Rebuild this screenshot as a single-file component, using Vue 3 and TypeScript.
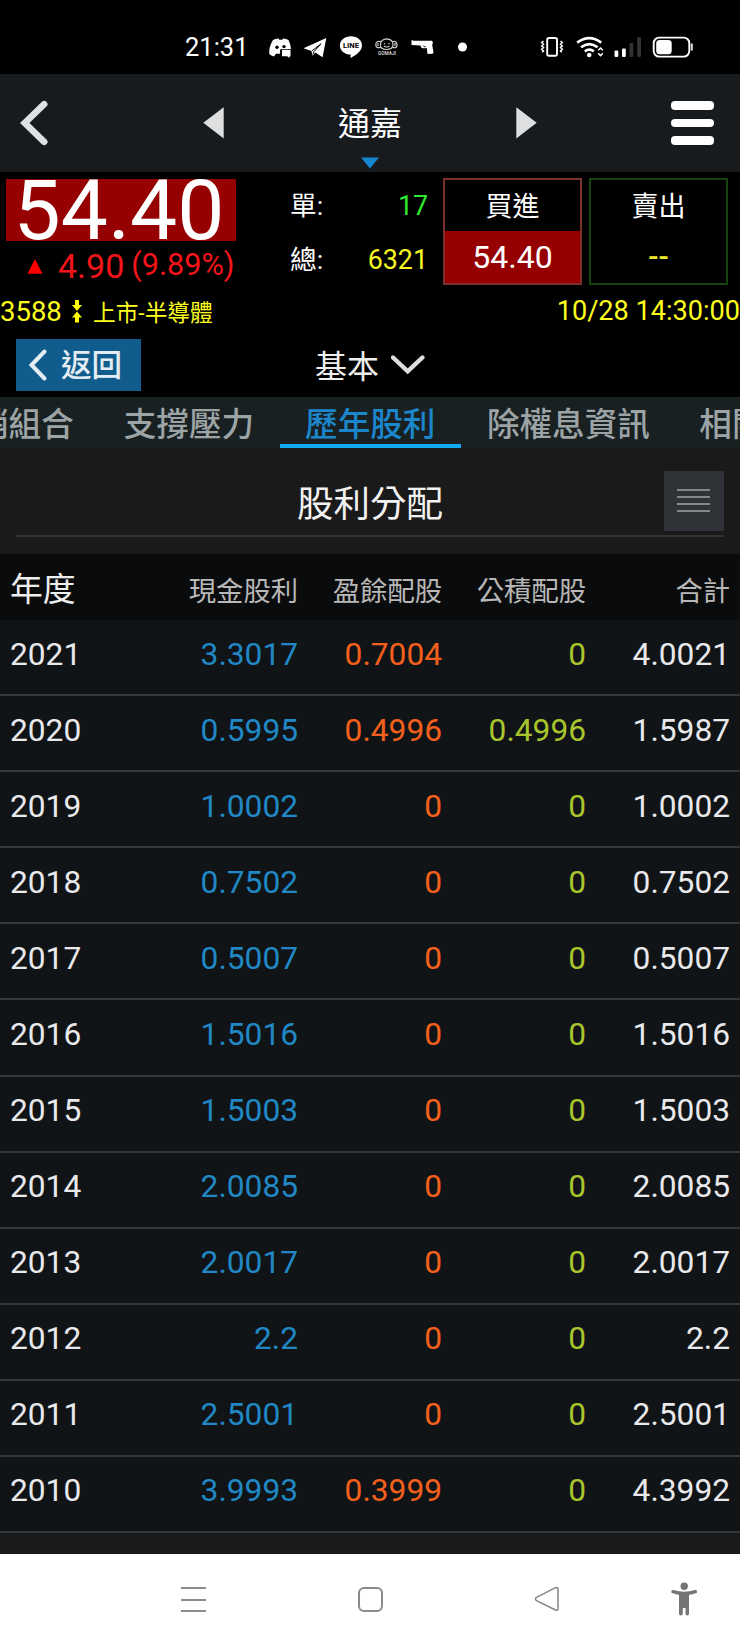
<script setup lang="ts">
interface Dividend {
  year: string
  cash: string
  earnings: string
  capital: string
  total: string
}

const tabs: { label: string; active?: boolean }[] = [
  { label: '銷組合' },
  { label: '支撐壓力' },
  { label: '歷年股利', active: true },
  { label: '除權息資訊' },
  { label: '相關' },
]

const row = (year: string, cash: string, earnings: string, capital: string, total: string): Dividend => ({
  year, cash, earnings, capital, total,
})

const dividends: Dividend[] = [
  row('2021', '3.3017', '0.7004', '0', '4.0021'),
  row('2020', '0.5995', '0.4996', '0.4996', '1.5987'),
  row('2019', '1.0002', '0', '0', '1.0002'),
  row('2018', '0.7502', '0', '0', '0.7502'),
  row('2017', '0.5007', '0', '0', '0.5007'),
  row('2016', '1.5016', '0', '0', '1.5016'),
  row('2015', '1.5003', '0', '0', '1.5003'),
  row('2014', '2.0085', '0', '0', '2.0085'),
  row('2013', '2.0017', '0', '0', '2.0017'),
  row('2012', '2.2', '0', '0', '2.2'),
  row('2011', '2.5001', '0', '0', '2.5001'),
  row('2010', '3.9993', '0.3999', '0', '4.3992'),
]
</script>

<template>
  <div class="screen">
    <div class="status">
      <span class="clock">21:31</span>
      <svg class="notices" width="200" height="24" viewBox="268 35 200 24">
        <!-- chat controller -->
        <path fill="#fff" d="M273 40q3-1.700 5.500-1.500l.8 1.300h3l.8-1.300q3 0 5.400 1.500 2.200 4 2.500 9h-9.500q-1.500 0-1.500 1.500v3.300h-4l-2 2.600q-3-.8-4.700-2.400Q268.500 47 273 40z" />
        <circle cx="277" cy="47.200" r="1.700" fill="#000" /><circle cx="284" cy="46.600" r="1.700" fill="#000" />
        <path fill="#fff" d="M282 49.800h8.500v6.500h-1v1.700l-2.300-1.700H282z" />
        <!-- paper plane -->
        <path fill="#fff" d="M303.500 48.300L326.300 38l-3.700 19.300-7.300-4.900-2.800 3.300-1-4.800z" />
        <path d="M312 50.800l9.100-7-7 7.600-1.200 3" stroke="#000" stroke-width="1" fill="none" />
        <!-- LINE -->
        <path fill="#fff" d="M351 36.200c6.300 0 11 4.100 11 9.200 0 5.700-6.500 9.800-11.600 12.700l.3-3.500c-6-.2-10.800-4-10.800-9.200 0-5.100 4.800-9.200 11.100-9.200z" />
        <text x="351" y="48" text-anchor="middle" textLength="16" lengthAdjust="spacingAndGlyphs" class="line-mark">LINE</text>
        <!-- monkey -->
        <g fill="none" stroke="#ccc" stroke-width="1.200">
          <path d="M380.500 44.500q0-5 6-5.600 6.500.5 6.500 5.600 0 5-6.500 5t-6-5z" />
          <path d="M381 41.500q-5-1-5.200 3t5.200 3M392.500 41.500q4-1 4.500 3t-4.500 3M378 43v3M395 43v3" />
          <path d="M384 46q2.600 2 5.400 0M384.500 43v1.300M389 43v1.300" />
        </g>
        <text x="387" y="55" text-anchor="middle" textLength="18" lengthAdjust="spacingAndGlyphs" class="gomaji-mark">GOMAJI</text>
        <!-- pistol -->
        <path fill="#fff" d="M411.500 40.700l.5-.7 1.500.8h18.500l1 2-.8 2 1.300 8-1 1-5 .2-.7-6q-3 .8-5.500-.2l-.8-2.300-9-.5z" />
        <path d="M423 45.500l1 1.200h1.800" stroke="#000" stroke-width=".8" fill="none" />
        <circle cx="462.500" cy="47" r="4.500" fill="#fff" />
      </svg>
      <svg class="system" width="154" height="24" viewBox="540 35 154 24">
        <g fill="none" stroke="#fff">
          <rect x="547.200" y="38" width="9.800" height="17.800" rx="1.800" stroke-width="1.900" />
          <path d="M543.500 41l-1.800 1.500 1.800 1.700-1.800 1.700 1.800 1.700-1.800 1.700 1.800 1.700-1.300 1.300M560.500 41l1.800 1.500-1.800 1.700 1.800 1.700-1.800 1.700 1.800 1.700-1.800 1.700 1.300 1.300" stroke-width="1.500" />
          <path d="M577.200 42.600q12.200-9 24 0M581 47.300q8.300-6.400 16.600 0M584.800 51.400q4.700-3.500 9 0" stroke-width="2.700" />
          <path d="M598.200 50.300l2.300-2.300 2.300 2.300M598.200 53.300l2.300 2.300 2.300-2.300" stroke-width="1.500" />
        </g>
        <circle cx="589.200" cy="55" r="2.300" fill="#fff" />
        <rect x="614.500" y="50.500" width="3.800" height="6.500" rx="1.200" fill="#fff" />
        <rect x="622" y="48.500" width="3.800" height="8.500" rx="1.200" fill="#fff" />
        <rect x="629.500" y="43" width="3.800" height="14" rx="1.200" fill="#333" />
        <rect x="637.200" y="37" width="3.800" height="20" rx="1.200" fill="#333" />
        <rect x="653.700" y="37.600" width="35.600" height="19" rx="5.500" fill="none" stroke="#fff" stroke-width="1.900" />
        <rect x="656.200" y="40" width="15.500" height="14.200" rx="3.500" fill="#fff" />
        <path d="M691.800 43.500v7" stroke="#ddd" stroke-width="2" />
      </svg>
    </div>

    <header class="topbar">
      <svg class="back-icon" width="30" height="48" viewBox="20 99 30 48"><path d="M44.200 104.200L24.800 123l19.400 18.800" fill="none" stroke="#dfe0e1" stroke-width="6.600" stroke-linecap="round" /></svg>
      <svg class="prev" width="21" height="32"><path d="M.300 15.800L20.700.200v31.400z" fill="#dedfe1" /></svg>
      <div class="stock">
        <span>通嘉</span>
        <svg width="18" height="12"><path d="M0 .500h18L9 11.500z" fill="#1487cc" /></svg>
      </div>
      <svg class="next" width="21" height="32"><path d="M.300.200L20.700 15.800.300 31.600z" fill="#dedfe1" /></svg>
      <div class="burger"><i></i><i></i><i></i></div>
    </header>

    <section class="quote">
      <div class="price-col">
        <div class="price">54.40</div>
        <div class="change">
          <svg width="16" height="15"><path d="M8 0l7.500 14.700H.5z" fill="#f00" /></svg>
          <span class="diff">4.90</span>
          <span class="pct">(9.89%)</span>
        </div>
      </div>
      <div class="volume">
        <div class="vol"><span>單:</span><b class="lime">17</b></div>
        <div class="vol"><span>總:</span><b class="yellow">6321</b></div>
      </div>
      <div class="deal buy"><span class="cap">買進</span><span class="val">54.40</span></div>
      <div class="deal sell"><span class="cap">賣出</span><span class="val">--</span></div>
    </section>

    <div class="meta">
      <span class="code">3588</span>
      <svg width="10" height="23" viewBox="0 0 10 23" fill="#ff0"><path d="M3 0h4v5h3L5 11 0 5h3zM3 22.500h4v-5h3L5 11.500 0 17.500h3z" /></svg>
      <span class="market">上市-半導體</span>
      <span class="time">10/28 14:30:00</span>
    </div>

    <div class="category">
      <div class="return">
        <svg width="20" height="32" viewBox="28 350 20 32"><path d="M44.500 352.500L31.500 366l13 13.500" fill="none" stroke="#e3edf3" stroke-width="4" stroke-linecap="round" /></svg>
        <span>返回</span>
      </div>
      <div class="select">
        <span>基本</span>
        <svg width="34" height="20" viewBox="391 355 34 20"><path d="M393 357.500l14.700 13.800 14.700-13.800" fill="none" stroke="#dedede" stroke-width="4.400" stroke-linecap="round" /></svg>
      </div>
    </div>

    <nav class="tabs">
      <span v-for="t in tabs" :key="t.label" class="tab" :class="{ active: t.active }">{{ t.label }}</span>
    </nav>

    <div class="section-head">
      <h1>股利分配</h1>
      <div class="list-btn"><i></i><i></i><i></i><i></i></div>
    </div>

    <div class="row head">
      <span class="year">年度</span><span>現金股利</span><span>盈餘配股</span><span>公積配股</span><span>合計</span>
    </div>
    <div class="body">
      <div v-for="d in dividends" :key="d.year" class="row">
        <span class="year">{{ d.year }}</span>
        <span class="cash">{{ d.cash }}</span>
        <span class="earnings">{{ d.earnings }}</span>
        <span class="capital">{{ d.capital }}</span>
        <span class="total">{{ d.total }}</span>
      </div>
    </div>

    <footer class="sysnav">
      <div class="recent"><i></i><i></i><i></i></div>
      <div class="home"></div>
      <svg class="sys-back" width="26" height="26" viewBox="534 1586 26 26"><path d="M536.500 1597.300L555.500 1587.600Q558 1586.800 558 1589.500V1608.500Q558 1611 555.500 1610L536.500 1600.700Q534.500 1599 536.500 1597.300z" fill="none" stroke="#858585" stroke-width="1.500" /></svg>
      <svg class="person" width="26" height="34" viewBox="671 1582 26 34">
        <circle cx="684.200" cy="1586.200" r="3.700" fill="#757575" />
        <path d="M673 1591.700q11.200 3.600 22.400 0" fill="none" stroke="#757575" stroke-width="3.400" stroke-linecap="round" />
        <path d="M679 1593h10v20.500q0 2-1.800 2t-1.700-2v-5.500h-2.700v5.500q0 2-1.900 2t-1.900-2z" fill="#757575" />
      </svg>
    </footer>
  </div>
</template>

<style>
body { margin: 0; background: #000; }
</style>

<style scoped>
* { box-sizing: border-box; }
.screen {
  width: 740px;
  height: 1644px;
  overflow: hidden;
  display: flex;
  flex-direction: column;
  background: #1a1a1a;
  color: #fff;
  font-family: Roboto, "Noto Sans CJK TC", sans-serif;
  white-space: nowrap;
}
svg, i { display: block; flex: none; }

.status { height: 74px; flex: none; display: flex; padding: 35px 0 0 185px; background: #000; }
.clock { width: 83px; font-size: 25.500px; line-height: 25px; }
.system { margin-left: 72px; }
.line-mark { font: 700 7px Roboto, sans-serif; fill: #000; }
.gomaji-mark { font: 700 5px Roboto, sans-serif; fill: #ccc; }

.topbar { height: 98px; flex: none; display: flex; background: #181b1e; }
.back-icon { margin: 25px 0 0 20px; }
.prev { margin: 33px 0 0 153px; }
.stock { width: 292px; padding-top: 27px; display: flex; flex-direction: column; align-items: center; font-size: 32px; line-height: 46px; }
.stock svg { margin-top: 10px; }
.next { margin-top: 33px; }
.burger { width: 43px; margin: 27px 0 0 134px; display: flex; flex-direction: column; gap: 9px; }
.burger i { height: 8.600px; border-radius: 4px; background: #fff; }

.quote { height: 124px; flex: none; display: flex; padding-top: 6px; background: #000; }
.price-col { width: 230px; margin-left: 6px; padding-top: 1px; }
.price { height: 62px; background: #960000; font-size: 84px; line-height: 64px; text-align: center; overflow: hidden; padding-right: 4px; }
.change { height: 48px; display: flex; align-items: baseline; padding-left: 21px; color: #f5141a; line-height: 50px; }
.change svg { align-self: flex-start; margin-top: 18px; }
.diff { margin-left: 15px; font-size: 34px; }
.pct { margin-left: 7px; font-size: 30.600px; position: relative; top: -3px; }
.volume { width: 138px; margin: 2px 0 0 54px; }
.vol { height: 54px; display: flex; justify-content: space-between; line-height: 52px; font-size: 26.700px; }
.vol b { font-weight: 400; font-size: 26.800px; }
.lime { color: #2fe82f; }
.yellow { color: #f8f820; }
.deal { width: 139px; height: 107px; margin-left: 15px; border: 2px solid #7b312b; display: flex; flex-direction: column; text-align: center; }
.cap { height: 51px; font-size: 27px; line-height: 54px; }
.buy .val { flex: 1; background: #960000; font-size: 32px; line-height: 52px; }
.sell { margin-left: 7px; border-color: #17430f; }
.sell .val { font-size: 30px; font-weight: 500; line-height: 51px; color: #f0e82c; }

.meta { height: 34px; flex: none; display: flex; align-items: center; padding-bottom: 4px; background: #000; color: #ffff1e; }
.code { width: 72px; font-size: 27.500px; }
.market { margin-left: 11px; font-size: 22.700px; }
.time { margin-left: auto; font-size: 27.100px; }

.category { height: 67px; flex: none; display: flex; background: #000; }
.return { width: 125px; height: 52px; margin: 9px 0 0 16px; padding-left: 12px; display: flex; align-items: center; background: #105c8d; color: #e3edf3; font-size: 30.500px; font-weight: 500; line-height: 52px; }
.return span { margin-left: 13px; padding-top: 2px; }
.select { margin: 11px 0 0 174px; display: flex; font-size: 32px; line-height: 52px; color: #eee; }
.select svg { margin: 14px 0 0 12px; }

.tabs { height: 51px; flex: none; display: flex; margin-left: -50px; background: #182022; color: #9ca4a6; font-size: 32.600px; font-weight: 500; line-height: 56px; }
.tab { height: 51px; padding: 0 25.500px 0 26px; border-bottom: 4px solid transparent; }
.tab:first-child { padding-right: 24px; }
.tab:last-child { padding-left: 24px; }
.tab.active { padding: 0 25.500px; color: #1c86cb; border-color: #13a9f5; }

.section-head { height: 89px; flex: none; margin: 0 16px; border-bottom: 2px solid #333; display: grid; grid-template-columns: 60px 1fr 60px; }
h1 { grid-column: 2; margin: 0; padding-top: 32px; text-align: center; font-size: 36.500px; font-weight: 400; line-height: 50px; color: #f2f2f2; }
.list-btn { height: 60px; margin-top: 23px; padding: 18px 14px 0 13px; display: flex; flex-direction: column; gap: 5px; background: #2f3237; }
.list-btn i { height: 2px; background: #81888b; }

.row { display: grid; grid-template-columns: 150px 148px 144px 144px 144px; text-align: right; align-items: center; background: #101417; border-bottom: 2px solid #35383b; font-size: 31.700px; padding-bottom: 7px; }
.year { text-align: left; padding-left: 10px; color: #e9e9eb; }
.head { height: 66px; flex: none; margin-top: 17px; padding: 4px 0 0; border: 0; background: #0a0b0c; font-size: 27.300px; color: #b8b8b8; }
.head .year { font-size: 32.800px; color: #eee; margin-top: -5px; }
.body { height: 913px; flex: none; display: grid; grid-template-rows: repeat(12, 1fr); }
.body .row { padding-bottom: 6px; }
.cash { color: #2088c4; }
.earnings { color: #f4601c; }
.capital { color: #a9c52c; }
.total { color: #e9e9eb; }

.sysnav { height: 90px; flex: none; margin-top: auto; display: flex; background: #fff; padding-top: 33px; }
.recent { width: 25px; margin-left: 181px; display: flex; flex-direction: column; gap: 9.500px; }
.recent i { height: 2px; background: #8c8c8c; }
.home { width: 25px; height: 25px; margin-left: 152px; border: 2px solid #8a8a8a; border-radius: 6px; }
.sys-back { margin: -1px 0 0 151px; }
.person { margin: -5px 0 0 111px; }
</style>
